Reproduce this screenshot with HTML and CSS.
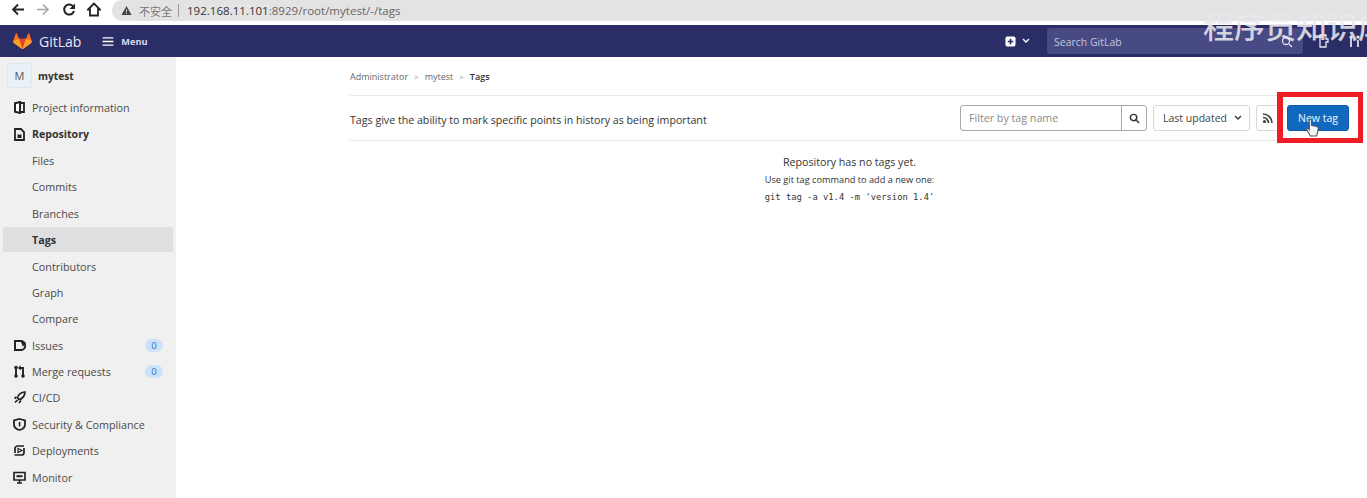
FILE: index.html
```html
<!DOCTYPE html>
<html lang="zh">
<head>
<meta charset="utf-8">
<title>Tags · mytest · GitLab</title>
<link rel="stylesheet" href="styles.css">
</head>
<body>
<div class="chrome">
  <div class="chrome-btns">
    <svg class="cicon" viewBox="0 0 14 15"><path d="M13 7.500H2M7 2.500l-5 5 5 5" fill="none" stroke="#222" stroke-width="1.800"/></svg>
    <svg class="cicon" viewBox="0 0 14 15"><path d="M1 7.500h11M7 2.500l5 5-5 5" fill="none" stroke="#a5a5a5" stroke-width="1.600"/></svg>
    <svg class="cicon" viewBox="0 0 14 15"><path d="M11.500 5A5 5 0 1 0 12 9" fill="none" stroke="#222" stroke-width="2"/><path d="M13 1.500V7H7.500z" fill="#222"/></svg>
    <svg class="cicon" viewBox="0 0 14 15"><path d="M7 1.500 1 7.500h2v6h8v-6h2z" fill="none" stroke="#222" stroke-width="1.800"/></svg>
  </div>
  <div class="url">
    <svg class="warn" viewBox="0 0 12 12"><path d="M6 1 .5 11h11z" fill="#444"/><path d="M5.500 4.500h1V8h-1zM5.500 8.800h1v1h-1z" fill="#e3e3e3"/></svg>
    <span class="insecure">不安全</span><span class="sep"></span>
    <span class="addr">192.168.11.101<span class="addr-dim">:8929/root/mytest/-/tags</span></span>
  </div>
</div>
<header class="nav">
  <svg class="logo" viewBox="0 0 24 22"><path d="M12 21.500 1 13.500.3 11 3.600 1.200c.2-.5.8-.5 1 0L7.600 8h8.800l3-6.800c.2-.5.8-.5 1 0L23.700 11l-.7 2.500z" fill="#fc6d26"/><path d="M12 21.500 7.600 8h8.800z" fill="#e24329"/><path d="M12 21.500 1 13.500.3 11 7.600 8zM12 21.500l11-8 .7-2.500L16.400 8z" fill="#fca326"/></svg>
  <span class="brand">GitLab</span>
  <svg class="burger" viewBox="0 0 12 10"><path d="M0 1h12M0 5h12M0 9h12" stroke="#fff" stroke-width="1.400"/></svg>
  <span class="menu">Menu</span>
  <span class="nav-fill"></span>
  <svg class="plus" viewBox="0 0 12 12"><rect width="11" height="11" x=".5" y=".5" rx="2" fill="#fff"/><path d="M6 3v6M3 6h6" stroke="#2b2d66" stroke-width="1.800"/></svg>
  <svg class="caret" viewBox="0 0 8 6"><path d="m1 1 3 3 3-3" fill="none" stroke="#fff" stroke-width="1.400"/></svg>
  <div class="search"><span>Search GitLab</span>
    <svg class="search-ic" viewBox="0 0 12 12"><circle cx="5" cy="5" r="3.500" fill="none" stroke="#dfe0ee" stroke-width="1.300"/><path d="m8 8 3 3" stroke="#dfe0ee" stroke-width="1.300"/></svg>
  </div>
  <svg class="nav-ic" viewBox="0 0 12 14"><path d="M2 1h6v4h2v3H8v5H2z" fill="none" stroke="#e8e8f2" stroke-width="1.300"/></svg>
  <svg class="nav-ic nav-ic2" viewBox="0 0 12 14"><path d="M2 4v9M9 6v7" stroke="#e8e8f2" stroke-width="1.700"/><circle cx="2" cy="3" r="1.600" fill="#e8e8f2"/><circle cx="9" cy="3" r="1.600" fill="#e8e8f2"/></svg>
</header>
<div class="main">
  <aside class="side">
    <div class="proj"><span class="avatar">M</span><span class="proj-name">mytest</span></div>
    <a class="item"><svg class="ic" viewBox="0 0 13 13"><path d="M2 2.300 7 1v11l-5-1.300z" fill="#fff" stroke="#222" stroke-width="2"/><path d="M7 2h4v9H7" fill="none" stroke="#222" stroke-width="1.800"/></svg>Project information</a>
    <a class="item strong"><svg class="ic" viewBox="0 0 13 13"><path d="M2 1h6l3 3v8H2z" fill="none" stroke="#222" stroke-width="1.800"/><path d="M4.500 6.500h4V10h-4z" fill="#222"/></svg>Repository</a>
    <a class="sub">Files</a>
    <a class="sub">Commits</a>
    <a class="sub">Branches</a>
    <a class="sub active">Tags</a>
    <a class="sub">Contributors</a>
    <a class="sub">Graph</a>
    <a class="sub">Compare</a>
    <a class="item"><svg class="ic" viewBox="0 0 13 13"><path d="M2 2h5.500A3.500 3.500 0 0 1 8 11H2z" fill="none" stroke="#222" stroke-width="2"/><path d="M8 3h4.500L10 8z" fill="#222"/></svg>Issues<span class="badge">0</span></a>
    <a class="item"><svg class="ic" viewBox="0 0 13 13"><path d="M3 3v7M10 5v5M7 3h3v3" fill="none" stroke="#222" stroke-width="1.900"/><circle cx="3" cy="2.500" r="1.800" fill="#222"/><circle cx="3" cy="11" r="1.800" fill="#222"/><circle cx="10" cy="11" r="1.800" fill="#222"/><path d="M7.500 0v5.500L5 3z" fill="#222"/></svg>Merge requests<span class="badge">0</span></a>
    <a class="item"><svg class="ic" viewBox="0 0 13 13"><path d="M12 1C8.500 1 5 3.500 4.500 7l1.500 1.500C9.500 8 12 4.500 12 1z" fill="none" stroke="#222" stroke-width="1.700"/><path d="M1.500 7.500l2-1.500M2 11.500l2.500-2.500M6 12l2-2.500" stroke="#222" stroke-width="1.700"/></svg>CI/CD</a>
    <a class="item"><svg class="ic" viewBox="0 0 13 13"><path d="M6.500 1 12 2.500V6.500c0 2.800-2.700 4.800-5.500 5.500C3.700 11.300 1 9.300 1 6.500V2.500z" fill="none" stroke="#222" stroke-width="1.800"/><path d="M5.800 4h1.600v4.500H5.800z" fill="#222"/></svg>Security &amp; Compliance</a>
    <a class="item"><svg class="ic" viewBox="0 0 13 13"><path d="M2 9V4.500A2.500 2.500 0 0 1 4.500 2H11M11 4v4.500A2.500 2.500 0 0 1 8.500 11H1.500" fill="none" stroke="#222" stroke-width="1.700"/><path d="M5 4.500 9 6.500 5 8.500z" fill="none" stroke="#222" stroke-width="1.200"/></svg>Deployments</a>
    <a class="item"><svg class="ic" viewBox="0 0 13 13"><path d="M1 1.500h11v7.500H1zM4 12h5M6.500 9v3" fill="none" stroke="#222" stroke-width="1.700"/><path d="M3.500 5.200h6" stroke="#222" stroke-width="2"/></svg>Monitor</a>
  </aside>
  <main class="content">
    <nav class="crumbs"><span>Administrator</span><i>&gt;</i><span>mytest</span><i>&gt;</i><b>Tags</b></nav>
    <div class="toolbar">
      <p class="lead">Tags give the ability to mark specific points in history as being important</p>
      <div class="filter"><span class="filter-in">Filter by tag name</span><span class="filter-btn"><svg class="mag" viewBox="0 0 12 12"><circle cx="5" cy="5" r="3.500" fill="none" stroke="#333" stroke-width="1.600"/><path d="m8 8 3 3" stroke="#333" stroke-width="1.600"/></svg></span></div>
      <div class="btn sort">Last updated<svg class="sort-caret" viewBox="0 0 8 6"><path d="m1 1 3 3 3-3" fill="none" stroke="#333" stroke-width="1.300"/></svg></div>
      <div class="btn rss"><svg viewBox="0 0 12 12"><circle cx="2.500" cy="9.500" r="1.600" fill="#444"/><path d="M1 5.500A5.500 5.500 0 0 1 6.500 11M1 2a9 9 0 0 1 9 9" fill="none" stroke="#444" stroke-width="1.700"/></svg></div>
      <div class="btn new">New tag</div>
    </div>
    <div class="empty">
      <p class="e1">Repository has no tags yet.</p>
      <p class="e2">Use git tag command to add a new one:</p>
      <p class="e3">git tag -a v1.4 -m 'version 1.4'</p>
    </div>
  </main>
</div>
<div class="hilite"></div>
<svg class="hand" viewBox="0 0 14 18"><path d="M4 1.500c1-.6 2 0 2 1V7l5 1c1 .3 1.500 1 1.400 2l-.6 4-1 3H5L1.500 11c-.5-1 .5-1.800 1.500-1l1 1z" fill="#f4f4f4" stroke="#555" stroke-width="1"/></svg>
<div class="mark">程序员知识库</div>
</body>
</html>
```
FILE: styles.css
```css
* { box-sizing: border-box; }
html, body { margin: 0; height: 498px; overflow: hidden; background: #fff; }
body { font-family: "Open Sans", "Noto Sans", "Noto Sans CJK SC", sans-serif; color: #303030; font-size: 11px; position: relative; }
p { margin: 0; }
svg { display: block; flex: none; }

.chrome { height: 25px; display: flex; align-items: flex-start; background: #fff; }
.chrome-btns { display: flex; width: 112px; padding: 2px 0 0 10.500px; gap: 11.500px; flex: none; }
.cicon { width: 14px; height: 15px; }
.url { flex: 1; height: 21px; background: #e3e3e3; border-radius: 10px 0 0 10px; display: flex; align-items: center; padding-left: 9px; color: #444; }
.warn { width: 11px; height: 11px; margin-right: 7px; }
.insecure { color: #777; font-size: 11px; }
.sep { width: 1px; height: 13px; background: #999; margin: 0 8px 0 6px; }
.addr { color: #333; font-size: 11.550px; }
.addr-dim { color: #666; }

.nav { height: 32px; background: #2b2d66; display: flex; align-items: center; padding-left: 13px; color: #fff; }
.logo { width: 19px; height: 18px; }
.brand { font-size: 14px; margin-left: 7px; color: #e9e9f3; }
.burger { width: 12px; height: 9px; margin-left: 21px; }
.menu { font-size: 9.200px; font-weight: 700; margin-left: 7px; color: #d8d9f0; }
.nav-fill { flex: 1; }
.plus { width: 11px; height: 11px; }
.caret { width: 8px; height: 6px; margin-left: 6px; margin-right: 17px; }
.search { width: 256px; height: 26px; border-radius: 3px; background: #484a83; display: flex; align-items: center; justify-content: space-between; padding: 1px 10px 0 7px; color: #c4c5de; font-size: 10.500px; }
.search-ic { width: 12px; height: 12px; }
.nav-ic { width: 12px; height: 14px; margin-left: 15px; }
.nav-ic2 { margin-right: 6px; margin-left: 19px; }

.main { display: flex; height: 441px; }
.side { width: 176px; flex: none; background: #f0f0f0; padding: 0 3px; }
.proj { height: 37.500px; display: flex; align-items: center; padding-left: 4px; }
.avatar { width: 25px; height: 25px; border: 1px solid #dde6ee; border-radius: 3px; background: #e9f1f8; display: flex; align-items: center; justify-content: center; color: #555; font-size: 11px; }
.proj-name { margin-left: 6px; font-weight: 700; font-size: 10.200px; color: #333; }
.item, .sub { height: 26.400px; display: flex; align-items: center; font-size: 10.800px; color: #4a4a4a; border-radius: 3px; }
.item { padding-left: 11px; }
.sub { padding-left: 29px; }
.ic { width: 13px; height: 13px; margin-right: 6px; margin-left: -1px; }
.strong { font-weight: 700; color: #333; font-size: 10.600px; }
.active { font-weight: 700; background: #dfdfe1; color: #333; height: 25px; margin: 1px 0 .400px; }
.badge { margin-left: auto; margin-right: 10px; width: 18px; height: 13px; border-radius: 7px; background: #cbe2f9; color: #1f75cb; font-size: 9.500px; display: flex; align-items: center; justify-content: center; }

.content { flex: 1; padding: 0 18px 0 174px; min-width: 0; }
.crumbs { height: 39px; display: flex; align-items: center; gap: 6px; border-bottom: 1px solid #e8e8e8; font-size: 9px; color: #666; padding-top: 1px; }
.crumbs i { font-style: normal; font-size: 8px; color: #999; }
.crumbs b { color: #333; font-weight: 600; }
.toolbar { height: 45px; display: flex; align-items: center; border-bottom: 1px solid #e8e8e8; }
.lead { font-size: 10.650px; color: #333; margin: 3px auto 0 0; }
.filter { width: 187px; height: 26px; display: flex; border: 1px solid #a8a8a8; border-radius: 3px; }
.filter-in { flex: 1; border-right: 1px solid #a8a8a8; display: flex; align-items: center; padding-left: 8px; color: #8a8a8a; font-size: 10.700px; }
.filter-btn { width: 24px; display: flex; align-items: center; justify-content: center; }
.mag { width: 11px; height: 11px; }
.btn { height: 26px; border: 1px solid #d8d8d8; border-radius: 3px; display: flex; align-items: center; justify-content: center; font-size: 10.500px; color: #444; }
.sort { width: 97px; margin-left: 6px; gap: 7px; justify-content: flex-start; padding-left: 9px; }
.sort-caret { width: 8px; height: 6px; }
.rss { width: 25px; margin-left: 6px; padding-right: 2px; }
.rss svg { width: 12px; height: 12px; }
.new { width: 62px; margin-left: 6px; background: #1068bf; border-color: #0d5bab; color: #f2f6fc; font-weight: 500; }

.empty { text-align: center; padding-top: 13px; }
.e1 { font-size: 10.650px; line-height: 16px; color: #333; }
.e2 { font-size: 9.200px; line-height: 18px; margin-top: 1px; color: #333; }
.e3 { font-family: "DejaVu Sans Mono", monospace; font-size: 8.800px; line-height: 16px; color: #333; }

.hilite { position: absolute; left: 1277px; top: 92px; width: 86px; height: 51px; border: 5px solid #ee1c25; border-left-width: 6px; }
.hand { position: absolute; left: 1305px; top: 118px; width: 15px; height: 19px; }
.mark { position: absolute; left: 1203px; top: 7px; font-size: 31px; line-height: 36px; font-weight: 500; color: rgba(232,232,238,.88); white-space: nowrap; width: 164px; overflow: hidden; font-family: "Noto Sans CJK SC", sans-serif; }
```
